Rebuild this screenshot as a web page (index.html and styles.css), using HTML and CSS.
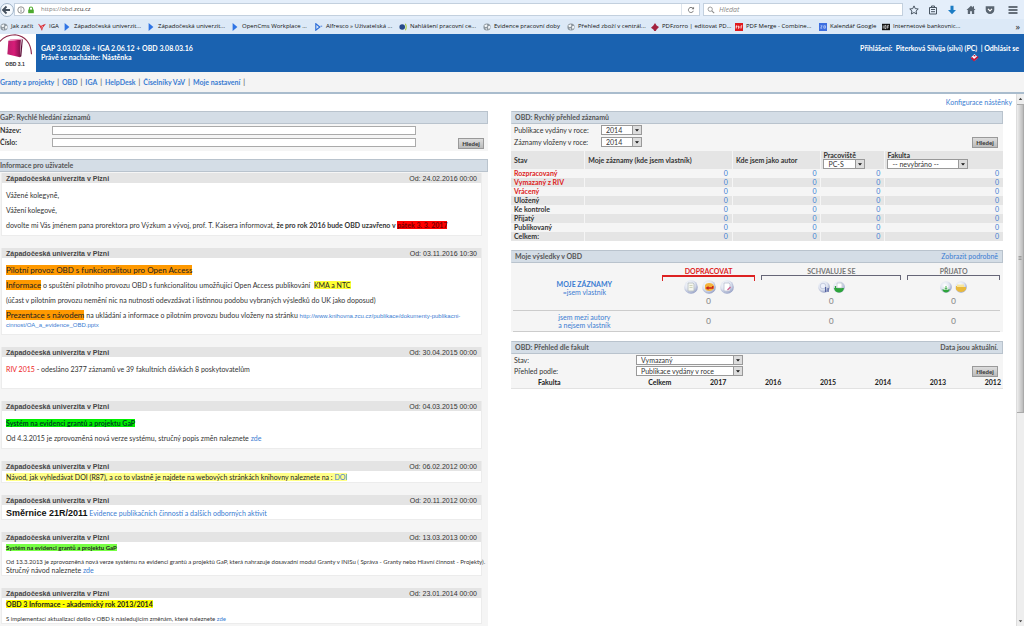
FILE: index.html
```html
<!DOCTYPE html>
<html lang="cs">
<head>
<meta charset="utf-8">
<title>OBD 3.1 – Nástěnka</title>
<link rel="stylesheet" href="styles.css">
</head>
<body>
<svg class="defs" aria-hidden="true">
  <defs>
    <radialGradient id="ball" cx=".4" cy=".35" r=".7"><stop offset="0" stop-color="#fff"/><stop offset=".55" stop-color="#dfe4f0"/><stop offset="1" stop-color="#8b97c0"/></radialGradient>
    <linearGradient id="book" x1="0" x2="1"><stop offset="0" stop-color="#b9206c"/><stop offset=".5" stop-color="#d81b78"/><stop offset="1" stop-color="#7c1149"/></linearGradient>
    <symbol id="globe" viewBox="0 0 10 10"><circle cx="5" cy="5" r="4.500" fill="#8c969e"/><path d="M1.500 3l3-1.500 1 1.500-1 2-2 0zM6 4.500l2.500-1 .7 2-2.200 2.500zM3 6l2 1-1 2z" fill="#f2f5f7"/></symbol>
    <symbol id="flag" viewBox="0 0 10 10"><path d="M2 0l6 5-6 5z" fill="#2f74e4"/></symbol>
    <symbol id="drop" viewBox="0 0 10 10"><path d="M2.500 4h5l-2.500 3z" fill="#111"/></symbol>
  </defs>
</svg>

<header class="browser">
  <div class="toolbar">
    <button class="back" aria-label="Zpět"><svg viewBox="0 0 14 14"><circle cx="7" cy="7" r="6.500" fill="#f6fafe" stroke="#9fb2c6"/><path d="M6.500 3.500L3 7l3.500 3.500M3.500 7H10" fill="none" stroke="#44505e" stroke-width="1.800"/></svg></button>
    <div class="address">
      <svg class="ico" viewBox="0 0 10 10"><circle cx="5" cy="5" r="4" fill="none" stroke="#777"/><path d="M5 4.300v3.200M5 2.300v1" stroke="#777"/></svg>
      <svg class="ico" viewBox="0 0 10 10"><path d="M3 5V3.200a2 2 0 0 1 4 0V5" fill="none" stroke="#4caa2e" stroke-width="1.300"/><path d="M1.500 4.500h7V9h-7z" fill="#4caa2e"/></svg>
      <span class="url">https://obd.<b>zcu.cz</b></span>
      <button class="reload" aria-label="Obnovit"><svg class="ico" viewBox="0 0 10 10"><path d="M7.500 3A3.200 3.200 0 1 0 8 6" fill="none" stroke="#777" stroke-width="1.200"/><path d="M8.800 1v3.200H5.600z" fill="#777"/></svg></button>
    </div>
    <label class="search"><svg class="ico" viewBox="0 0 10 10"><circle cx="4" cy="4" r="2.700" fill="none" stroke="#888"/><path d="M6 6l3 3" stroke="#888" stroke-width="1.300"/></svg><input type="text" placeholder="Hledat" aria-label="Hledat"></label>
    <div class="tools">
      <button aria-label="Záložka"><svg viewBox="0 0 10 10"><path d="M5 .9l1.250 2.700 3 .4-2.200 2 .6 3L5 7.500 2.350 9l.6-3L.75 4l3-.4z" fill="none" stroke="#4a5663"/></svg></button>
      <button aria-label="Seznam záložek"><svg viewBox="0 0 10 10"><path d="M1.500 2.500h7v6.500h-7zM3.500 2.500V1h3v1.500M3 4.500h4M3 6.700h4" fill="none" stroke="#4a5663"/></svg></button>
      <button aria-label="Stahování"><svg viewBox="0 0 10 10"><path d="M3.500.8h3V5H9L5 9.300 1 5h2.500z" fill="#1c7cc4"/></svg></button>
      <button aria-label="Domů"><svg viewBox="0 0 10 10"><path d="M5 .7L.5 5h1.300v4h2.300V6.300h1.800V9h2.300V5h1.300L8 3.400V1.200H6.800v1.200z" fill="#5a6571"/></svg></button>
      <button aria-label="Pocket"><svg viewBox="0 0 10 10"><path d="M.7 1.200h8.600v3.500a4.300 4.300 0 0 1-8.600 0z" fill="#5a6571"/><path d="M3 3.800l2 2 2-2" fill="none" stroke="#fff" stroke-width="1.200"/></svg></button>
      <button class="burger" aria-label="Nabídka"><svg viewBox="0 0 10 10"><path d="M.5 2h9M.5 5h9M.5 8h9" stroke="#3c4650" stroke-width="1.600"/></svg></button>
    </div>
  </div>
  <nav class="bookmarks" aria-label="Záložky">
    <a class="short" href="#"><svg class="ico" viewBox="0 0 10 10"><use href="#globe"/></svg>Jak začít</a>
    <a class="tiny" href="#"><svg class="ico" viewBox="0 0 10 10"><path d="M0 1l4 2 6-2-4 5-1 4-2-4z" fill="#d6252f"/><path d="M2 3l4 1-2 3" fill="none" stroke="#fff" stroke-width=".6"/></svg>IGA</a>
    <a href="#"><svg class="ico" viewBox="0 0 10 10"><use href="#flag"/></svg>Západočeská univerzit...</a>
    <a href="#"><svg class="ico" viewBox="0 0 10 10"><use href="#flag"/></svg>Západočeská univerzit...</a>
    <a href="#"><svg class="ico" viewBox="0 0 10 10"><use href="#flag"/></svg>OpenCms Workplace ...</a>
    <a href="#"><svg class="ico" viewBox="0 0 10 10"><path d="M1 1l5 4-5 4z" fill="none" stroke="#2a6bd8" stroke-width="1.400"/><path d="M7 4h2" stroke="#2a6bd8"/></svg>Alfresco » Uživatelská ...</a>
    <a href="#"><svg class="ico" viewBox="0 0 10 10"><circle cx="4" cy="5" r="3.500" fill="#264a8a"/><path d="M8 1q2 4 0 8" fill="none" stroke="#a6c735" stroke-width="1.300"/></svg>Nahlášení pracovní ce...</a>
    <a href="#"><svg class="ico" viewBox="0 0 10 10"><use href="#globe"/></svg>Evidence pracovní doby</a>
    <a href="#"><svg class="ico" viewBox="0 0 10 10"><use href="#globe"/></svg>Přehled zboží v centrál...</a>
    <a href="#"><svg class="ico" viewBox="0 0 10 10"><path d="M5 0l2 3 3 2-3 3-1 2H4L3 8 0 6l3-3z" fill="#a3233f"/></svg>PDFzorro | editovat PD...</a>
    <a href="#"><svg class="ico" viewBox="0 0 10 10"><path d="M0 0h10v10H0z" fill="#e0181c"/><path d="M1.500 7V3.500h1v1.500h-1M4.500 7V3.500q1.500 1.700 0 3.300M7.500 7V3.500h1.500M7.500 5h1" fill="none" stroke="#fff" stroke-width=".9"/></svg>PDF Merge - Combine...</a>
    <a class="medium" href="#"><svg class="ico" viewBox="0 0 10 10"><path d="M0 0h10v10H0z" fill="#3c6ee0"/><path d="M2 3.500h2l-2 3h2M6 3.500h2v3H6z" fill="none" stroke="#dce7ff" stroke-width=".8"/></svg>Kalendář Google</a>
    <a href="#"><svg class="ico" viewBox="0 0 10 10"><path d="M0 1h10v8H0z" fill="#111"/><path d="M1.500 3v4M3.500 3h1.500v4H3.500zM7 7V3h1.700M7 5h1.500" fill="none" stroke="#fff" stroke-width=".8"/></svg>Internetové bankovnic...</a>
    <button class="more" aria-label="Další záložky">»</button>
  </nav>
</header>

<header class="banner">
  <div class="logo">
    <svg viewBox="0 0 35 28"><path d="M-1 8Q5 .8 15 .8 31 3 32 21" fill="none" stroke="#8e2a4c" stroke-width="1.200"/><path d="M8 7l13-1-1 18-13-3z" fill="url(#book)"/><path d="M8 7l2-1.500 12-.5-1 1z" fill="#e58ab6"/><path d="M22 5l1 1-1.500 17-1.500 1z" fill="#5d0c37"/></svg>
    <span>OBD 3.1</span>
  </div>
  <div class="versions">GAP 3.03.02.08 + IGA 2.06.12 + OBD 3.08.03.16<br>Právě se nacházíte: Nástěnka</div>
  <div class="account">
    <div>Přihlášení: &nbsp;Piterková Silvija (silvi) (PC) &nbsp;| <a href="#">Odhlásit se</a></div>
    <svg viewBox="0 0 10 10"><path d="M1 5l4-4 4 4-4 4z" fill="#fff"/><path d="M1.500 5l3 3L9 4" fill="none" stroke="#c4153c" stroke-width="2"/><path d="M4 3h2" stroke="#c4153c" stroke-width="1.500"/></svg>
  </div>
</header>

<nav class="menu">
  <a href="#">Granty a projekty</a><i>|</i><a href="#">OBD</a><i>|</i><a href="#">IGA</a><i>|</i><a href="#">HelpDesk</a><i>|</i><a href="#">Číselníky VaV</a><i>|</i><a href="#">Moje nastavení</a><i>|</i>
</nav>

<div class="viewport">
<main class="board">
  <a class="configure" href="#">Konfigurace nástěnky</a>

  <div class="column">
    <section class="panel">
      <h2>GaP: Rychlé hledání záznamů</h2>
      <form class="quick">
        <label for="nazev">Název:</label><input id="nazev" type="text">
        <label for="cislo">Číslo:</label><input id="cislo" type="text">
        <button class="go" type="button">Hledej</button>
      </form>
    </section>

    <section class="panel news">
      <h2>Informace pro uživatele</h2>
      <article>
        <h3>Západočeská univerzita v Plzni <time>Od: 24.02.2016 00:00</time></h3>
        <div class="text airy">
          <p>Vážené kolegyně,</p>
          <p>Vážení kolegové,</p>
          <p>dovolte mi Vás jménem pana prorektora pro Výzkum a vývoj, prof. T. Kaisera informovat, <b>že pro rok 2016 bude OBD uzavřeno v <mark class="red">pátek 3. 3. 2017</mark></b></p>
        </div>
      </article>
      <article>
        <h3>Západočeská univerzita v Plzni <time>Od: 03.11.2016 10:30</time></h3>
        <div class="text airy">
          <p><mark class="orange">Pilotní provoz OBD s funkcionalitou pro Open Access</mark></p>
          <p><mark class="orange">Informace</mark> o spuštění pilotního provozu OBD s funkcionalitou umožňující Open Access publikování &nbsp;<mark>KMA a NTC</mark></p>
          <p>(účast v pilotním provozu nemění nic na nutnosti odevzdávat i listinnou podobu vybraných výsledků do UK jako doposud)</p>
          <p><mark class="orange">Prezentace s návodem</mark> na ukládání a informace o pilotním provozu budou vloženy na stránku <a class="address-link" href="#">http://www.knihovna.zcu.cz/publikace/dokumenty-publikacni-<br>cinnost/OA_a_evidence_OBD.pptx</a></p>
        </div>
      </article>
      <article>
        <h3>Západočeská univerzita v Plzni <time>Od: 30.04.2015 00:00</time></h3>
        <div class="text roomy">
          <p><span class="alert">RIV 2015</span> - odesláno 2377 záznamů ve 39 fakultních dávkách 8 poskytovatelům</p>
        </div>
      </article>
      <article>
        <h3>Západočeská univerzita v Plzni <time>Od: 04.03.2015 00:00</time></h3>
        <div class="text airy">
          <p><b><mark class="green">Systém na evidenci grantů a projektu GaP</mark></b></p>
          <p>Od 4.3.2015 je zprovozněná nová verze systému, stručný popis změn naleznete <a href="#">zde</a></p>
        </div>
      </article>
      <article>
        <h3>Západočeská univerzita v Plzni <time>Od: 06.02.2012 00:00</time></h3>
        <div class="text">
          <p><mark class="pale">Návod, jak vyhledávat DOI (R87), a co to vlastně je najdete na webových stránkách knihovny naleznete na : <a href="#">DOI</a></mark></p>
        </div>
      </article>
      <article>
        <h3>Západočeská univerzita v Plzni <time>Od: 20.11.2012 00:00</time></h3>
        <div class="text">
          <p><strong class="rule">Směrnice 21R/2011</strong> <a href="#">Evidence publikačních činností a dalších odborných aktivit</a></p>
        </div>
      </article>
      <article>
        <h3>Západočeská univerzita v Plzni <time>Od: 13.03.2013 00:00</time></h3>
        <div class="text spaced">
          <p class="humanist"><b><mark class="lime">Systém na evidenci grantů a projektu GaP</mark></b></p>
          <div>
            <p class="humanist">Od 13.3.2013 je zprovozněná nová verze systému na evidenci grantů a projektů GaP, která nahrazuje dosavadní modul Granty v INISu ( Správa - Granty nebo Hlavní činnost - Projekty).</p>
            <p>Stručný návod naleznete <a href="#">zde</a></p>
          </div>
        </div>
      </article>
      <article>
        <h3>Západočeská univerzita v Plzni <time>Od: 23.01.2014 00:00</time></h3>
        <div class="text spaced">
          <p><b><mark class="yellow">OBD 3 Informace - akademický rok 2013/2014</mark></b></p>
          <p class="humanist">S implementací aktualizací došlo v OBD k následujícím změnám, které naleznete <a href="#">zde</a></p>
        </div>
      </article>
    </section>
  </div>

  <div class="column">
    <section class="panel">
      <h2>OBD: Rychlý přehled záznamů</h2>
      <form class="filters years">
        <label for="vydany">Publikace vydány v roce:</label>
        <span class="pick"><select id="vydany"><option>2014</option></select><svg viewBox="0 0 10 10"><use href="#drop"/></svg></span>
        <label for="vlozeny">Záznamy vloženy v roce:</label>
        <span class="pick"><select id="vlozeny"><option>2014</option></select><svg viewBox="0 0 10 10"><use href="#drop"/></svg></span>
        <button class="go" type="button">Hledej</button>
      </form>
      <table class="states">
        <colgroup><col class="c-state"><col class="c-own"><col class="c-author"><col class="c-dept"><col></colgroup>
        <thead><tr>
          <th>Stav</th><th>Moje záznamy (kde jsem vlastník)</th><th>Kde jsem jako autor</th>
          <th><label for="prac">Pracoviště</label><span class="pick dept"><select id="prac"><option>PC-S</option></select><svg viewBox="0 0 10 10"><use href="#drop"/></svg></span></th>
          <th><label for="fak">Fakulta</label><span class="pick faculty"><select id="fak"><option>-- nevybráno --</option></select><svg viewBox="0 0 10 10"><use href="#drop"/></svg></span></th>
        </tr></thead>
        <tbody>
          <tr class="open"><th>Rozpracovaný</th><td>0</td><td>0</td><td>0</td><td>0</td></tr>
          <tr class="open"><th>Vymazaný z RIV</th><td>0</td><td>0</td><td>0</td><td>0</td></tr>
          <tr class="open"><th>Vrácený</th><td>0</td><td>0</td><td>0</td><td>0</td></tr>
          <tr><th>Uložený</th><td>0</td><td>0</td><td>0</td><td>0</td></tr>
          <tr><th>Ke kontrole</th><td>0</td><td>0</td><td>0</td><td>0</td></tr>
          <tr><th>Přijatý</th><td>0</td><td>0</td><td>0</td><td>0</td></tr>
          <tr><th>Publikovaný</th><td>0</td><td>0</td><td>0</td><td>0</td></tr>
          <tr><th>Celkem:</th><td>0</td><td>0</td><td>0</td><td>0</td></tr>
        </tbody>
      </table>
    </section>

    <section class="panel">
      <h2>Moje výsledky v OBD <a href="#">Zobrazit podrobně</a></h2>
      <div class="results">
        <div class="line owner">
          <a class="who" href="#"><b>MOJE ZÁZNAMY</b><br>=jsem vlastník</a>
          <div class="stage todo"><h4>DOPRACOVAT</h4>
            <div class="balls">
              <svg viewBox="0 0 14 14"><circle cx="7" cy="7" r="6.800" fill="url(#ball)"/><path d="M4 3h5l1 1v7H4z" fill="#f4f6ee" stroke="#a3abb3" stroke-width=".6"/><path d="M5.500 5.500h3M5.500 7.500h3" stroke="#b9c09a" stroke-width=".6"/></svg>
              <svg viewBox="0 0 14 14"><circle cx="7" cy="7" r="6.800" fill="url(#ball)"/><path d="M3 5q1-2 4-2 4 0 5 3v2q-1 3-5 3-3 0-4-2z" fill="#f3b33c"/><path d="M10.800 6v2H6" fill="none" stroke="#c8231b" stroke-width="1.400"/><path d="M6.500 6v4L3.500 8z" fill="#c8231b"/></svg>
              <svg viewBox="0 0 14 14"><circle cx="7" cy="7" r="6.800" fill="url(#ball)"/><path d="M4 3h5l1 1v7H4z" fill="#fff" stroke="#a3abc3" stroke-width=".6"/><path d="M7.500 10l3-3" stroke="#cf5a8c" stroke-width="1.200"/></svg>
            </div><span>0</span></div>
          <div class="stage wait"><h4>SCHVALUJE SE</h4>
            <div class="balls">
              <svg viewBox="0 0 14 14"><circle cx="7" cy="7" r="5.800" fill="url(#ball)"/><circle cx="6" cy="6" r="2.800" fill="#edf1fb" stroke="#a8b1cc" stroke-width=".6"/><path d="M8 7h1.200v5H8zM10.500 8h1.200v4h-1.200z" fill="#5361a0"/></svg>
              <svg viewBox="0 0 14 14"><circle cx="7" cy="7" r="5.800" fill="url(#ball)"/><path d="M2 8h10q-1 4.500-5 4.500T2 8z" fill="#2da53a"/><path d="M5 3h5v5H5z" fill="#fff" stroke="#9ba6b3" stroke-width=".5"/><path d="M3.500 6v3.500H8" fill="none" stroke="#2da53a" stroke-width="1.300"/></svg>
            </div><span>0</span></div>
          <div class="stage done"><h4>PŘIJATO</h4>
            <div class="balls">
              <svg viewBox="0 0 14 14"><circle cx="7" cy="7" r="5.800" fill="url(#ball)"/><path d="M3 9.500h8q-1.500 3-4 3t-4-3z" fill="#2da53a"/><path d="M5 6h4v3.500H5z" fill="#fff"/><path d="M7 6v3M5.500 7.800l1.500 1.500 1.500-1.500" fill="none" stroke="#2da53a" stroke-width=".9"/></svg>
              <svg viewBox="0 0 14 14"><circle cx="7" cy="7" r="5.800" fill="url(#ball)"/><path d="M2 6h4l1 1h5v2.500q-2 2.500-5 2.500t-5-2.500z" fill="#e9b93c"/><path d="M3 4.500h7V7H3z" fill="#f7e59d"/></svg>
            </div><span>0</span></div>
        </div>
        <div class="line">
          <a class="who" href="#">jsem mezi autory<br>a nejsem vlastník</a>
          <span>0</span><span>0</span><span>0</span>
        </div>
      </div>
    </section>

    <section class="panel">
      <h2>OBD: Přehled dle fakult <span>Data jsou aktuální.</span></h2>
      <form class="filters faculties">
        <label for="stav">Stav:</label>
        <span class="pick"><select id="stav"><option>Vymazaný</option></select><svg viewBox="0 0 10 10"><use href="#drop"/></svg></span>
        <label for="podle">Přehled podle:</label>
        <span class="pick"><select id="podle"><option>Publikace vydány v roce</option></select><svg viewBox="0 0 10 10"><use href="#drop"/></svg></span>
        <button class="go" type="button">Hledej</button>
      </form>
      <table class="totals">
        <colgroup><col class="c-fac"><col class="c-sum"></colgroup>
        <tr><th class="mid">Fakulta</th><th>Celkem</th><th>2017</th><th>2016</th><th>2015</th><th>2014</th><th>2013</th><th>2012</th></tr>
      </table>
    </section>
  </div>
</main>
<div class="scrollbar" aria-hidden="true">
  <svg viewBox="0 0 8 10"><path d="M2 6h4L4 3.500z" fill="#444"/></svg>
  <div class="thumb"><svg viewBox="0 0 8 10"><path d="M2 3h4M2 5h4M2 7h4" stroke="#777" stroke-width=".8"/></svg></div>
  <svg viewBox="0 0 8 10"><path d="M2 4h4L4 6.500z" fill="#444"/></svg>
</div>
</div>
</body>
</html>
```

FILE: styles.css
```css
* { box-sizing: border-box; }
body { margin: 0; height: 100vh; display: flex; flex-direction: column; overflow: hidden; background: #fff; color: #333; font: 7px/9px Lato, "Liberation Sans", Arial, sans-serif; }
h2, h3, h4, p, form { margin: 0; }
a { color: #3a7cd2; text-decoration: none; }
button, input, select { font: inherit; color: inherit; margin: 0; padding: 0; border: 0; border-radius: 0; background: none; }
svg { display: block; }
.defs { position: absolute; width: 0; height: 0; }

/* browser chrome */
.browser { flex: none; background: #dce9f7; font-family: "Open Sans", "Noto Sans", sans-serif; color: #222; font-size: 6px; }
.ico { width: 8px; height: 8px; flex: none; }
.toolbar { display: flex; align-items: center; height: 19px; background: #e4eefa; }
.back { width: 14px; height: 14px; flex: none; }
.back svg { width: 14px; height: 14px; }
.address { flex: 1; display: flex; align-items: center; gap: 2px; height: 13px; padding-left: 2px; background: #fff; border: 1px solid #c3d0de; }
.url { margin-left: 4px; color: #777; }
.url b { color: #222; font-weight: 400; }
.reload { width: 18px; margin-left: auto; padding-left: 5px; align-self: stretch; border-left: 1px solid #dde4ec; }
.search { display: flex; align-items: center; gap: 4px; width: 200px; height: 13px; margin-left: 3px; padding-left: 3px; background: #fff; border: 1px solid #c3d0de; }
.search input { flex: 1; min-width: 0; outline: 0; font-style: italic; font-size: 7px; }
.search input::placeholder { color: #888; opacity: 1; }
.tools { display: flex; align-items: center; gap: 9px; padding: 0 6px; }
.tools svg { width: 10px; height: 10px; }
.burger { padding-left: 4px; }
.bookmarks { display: flex; align-items: center; gap: 5px; height: 15px; overflow: hidden; padding-right: 4px; }
.bookmarks a { display: flex; align-items: center; gap: 3px; width: 79px; flex: none; color: #111; white-space: nowrap; }
.bookmarks .short { width: 33px; }
.bookmarks .tiny { width: 20px; }
.bookmarks .medium { width: 58px; }
.more { margin-left: auto; font-size: 9px; }

/* application header */
.banner { flex: none; display: flex; background: #1a62b0; color: #fff; font-family: "Liberation Sans", Arial, sans-serif; font-weight: 700; }
.banner a { color: #fff; }
.versions, .account { font-family: Lato, "Liberation Sans", sans-serif; padding: 10px 5px; }
.logo { width: 36px; height: 38px; background: #fff; color: #333; text-align: center; font-size: 5px; line-height: 6px; padding-right: 6px; }
.logo svg { width: 35px; height: 27px; }
.account { margin-left: auto; }
.account svg { width: 9px; height: 9px; margin: 0 40px 0 auto; }
.menu { flex: none; display: flex; gap: 3px; height: 22px; padding-top: 6px; background: #f4f4f4; border-bottom: 2px solid #a9bccd; font-weight: 700; }
.menu i { font-style: normal; font-weight: 400; }

/* dashboard */
.viewport { flex: 1; min-height: 0; display: flex; overflow: hidden; }
.board { flex: 1; min-width: 0; display: grid; grid-template-columns: 490fr 492fr; grid-template-rows: 17px auto; column-gap: 23px; margin-left: -2px; padding-right: 13px; }
.configure { grid-column: 1 / 3; justify-self: end; margin-right: -9px; padding-top: 4px; }
.column { min-width: 0; display: flex; flex-direction: column; gap: 8px; }
.column + .column { gap: 9px; }
.panel { background: #f5f5f5; }
.panel h2 { display: flex; justify-content: space-between; height: 13px; padding: 0 4px 0 1px; border: 1px solid #b9c3cd; border-left-color: #d4dde6; background: #d4dde6; color: #555; font-size: 7px; line-height: 11px; font-weight: 700; }
.panel h2 a { font-weight: 400; }
.column + .column h2 { padding-left: 3px; }
.go { width: 26px; height: 11px; border: 1px solid #999; background: linear-gradient(#ddd, #bbb); font-size: 6px; line-height: 9px; font-weight: 700; }
.quick { display: grid; grid-template-columns: 54px 364fr 42px 30px; grid-auto-rows: 9px; row-gap: 3px; padding: 2px 0 4px; font-weight: 700; }
.quick input { height: 9px; border: 1px solid #aaa; background: #fff; }
.quick label { grid-column: 1; padding-left: 2px; }
.quick .go { grid-column: 4; grid-row: 2; }

/* news */
.news article { margin: 1px 6px 12px 3px; background: #fff; border: 1px solid #ececec; border-top: 0; }
.news h3 { display: flex; justify-content: space-between; padding: 1px 4px 0; background: #e4e4e4; color: #444; font-family: "Liberation Sans", Arial, sans-serif; font-size: 7px; line-height: 9px; font-weight: 700; }
.news time { font-weight: 400; color: #333; }
.text { padding: 2px 4px 0; }
.text p { white-space: nowrap; }
.airy { display: grid; gap: 6px; padding: 8px 4px 5px; }
.roomy { padding: 8px 4px 14px; }
.spaced { display: grid; gap: 6px; }
mark { background: #ff3; color: #222; }
mark.red { background: #f00; color: #700; }
mark.orange { background: #f90; font-size: 8px; line-height: 9px; }
mark.green { background: #0e0; color: #042; }
mark.pale { background: #ff8; }
mark.lime { background: #7f4; }
mark.yellow { background: #ff0; }
.alert { color: #e22; }
.address-link { font-family: "Liberation Sans", Arial, sans-serif; font-size: 6px; line-height: 8px; }
.rule { font: 700 9px/12px "Liberation Sans", Arial, sans-serif; color: #111; }
.humanist { font-size: 6px; line-height: 8px; }

/* drop-downs */
.filters { display: grid; grid-auto-rows: 10px; align-items: center; gap: 2px 0; padding: 1px 5px 4px 3px; }
.filters label { grid-column: 1; }
.filters .go { grid-column: 4; grid-row: 2; }
.years { grid-template-columns: 87px 41px 1fr 26px; }
.faculties { grid-template-columns: 122px 107px 1fr 26px; row-gap: 1px; padding: 1px 5px 2px 3px; }
.pick { display: flex; height: 10px; border: 1px solid #999; background: #fff; }
.pick select { flex: 1; min-width: 0; appearance: none; padding-left: 4px; line-height: 8px; outline: 0; }
.pick svg { width: 9px; height: 8px; flex: none; background: #ddd; border-left: 1px solid #999; }
.dept { width: 42px; }
.faculty { width: 81px; }

/* tables */
table { width: 100%; table-layout: fixed; border-collapse: collapse; }
th { text-align: left; padding: 0 3px; }
td { text-align: right; padding: 0 4px; color: #3a7cd2; }
.states th + th, .states td { border-left: 1px solid #f5f5f5; }
.states thead th { height: 18px; background: #e5e5e5; }
.states thead th:nth-child(n+4) { padding: 0 2px; }
.states thead label { display: block; line-height: 8px; }
.states thead .pick { font-weight: 400; }
.states tbody tr:nth-child(even) { background: #e5e5e5; }
.states .open th { color: #d22; }
.c-state { width: 15%; }
.c-own { width: 30%; }
.c-author { width: 18%; }
.c-dept { width: 13%; }
.totals { border-bottom: 1px solid #e2e2e2; color: #222; }
.totals th { text-align: right; padding: 0 2px 1px 0; }
.totals .mid { text-align: center; }
.c-fac { width: 16%; }
.c-sum { width: 17%; }

/* result stages */
.results { padding: 4px 3px 0 2px; }
.line { display: grid; grid-template-columns: 143fr 94fr 140fr 93fr; column-gap: 6px; align-items: center; text-align: center; border-bottom: 1px solid #ccc; padding-bottom: 2px; }
.line + .line { padding-top: 2px; }
.line span { font: 9px/14px "Liberation Sans", Arial, sans-serif; color: #888; }
.stage { display: flex; flex-direction: column; }
.who { line-height: 8px; }
.stage h4 { height: 12px; color: #777; font-size: 7px; line-height: 8px; }
.stage h4::after { content: ""; display: block; height: 4px; border: 1px solid #667; border-bottom: 0; }
.todo h4 { color: #d22; }
.todo h4::after { border-color: #d22; border-top-width: 2px; }
.balls { display: flex; justify-content: center; gap: 4px; padding-top: 1px; }
.wait .balls, .done .balls { gap: 1px; }
.balls svg { width: 14px; height: 14px; }

/* scrollbar */
.scrollbar { flex: none; width: 8px; display: flex; flex-direction: column; background: #eee; border-left: 1px solid #ddd; }
.scrollbar svg { width: 7px; height: 10px; }
.thumb { height: 58%; display: flex; align-items: center; background: linear-gradient(90deg, #eee, #bbb); border: 1px solid #aaa; border-left: 0; margin-bottom: auto; }
```
